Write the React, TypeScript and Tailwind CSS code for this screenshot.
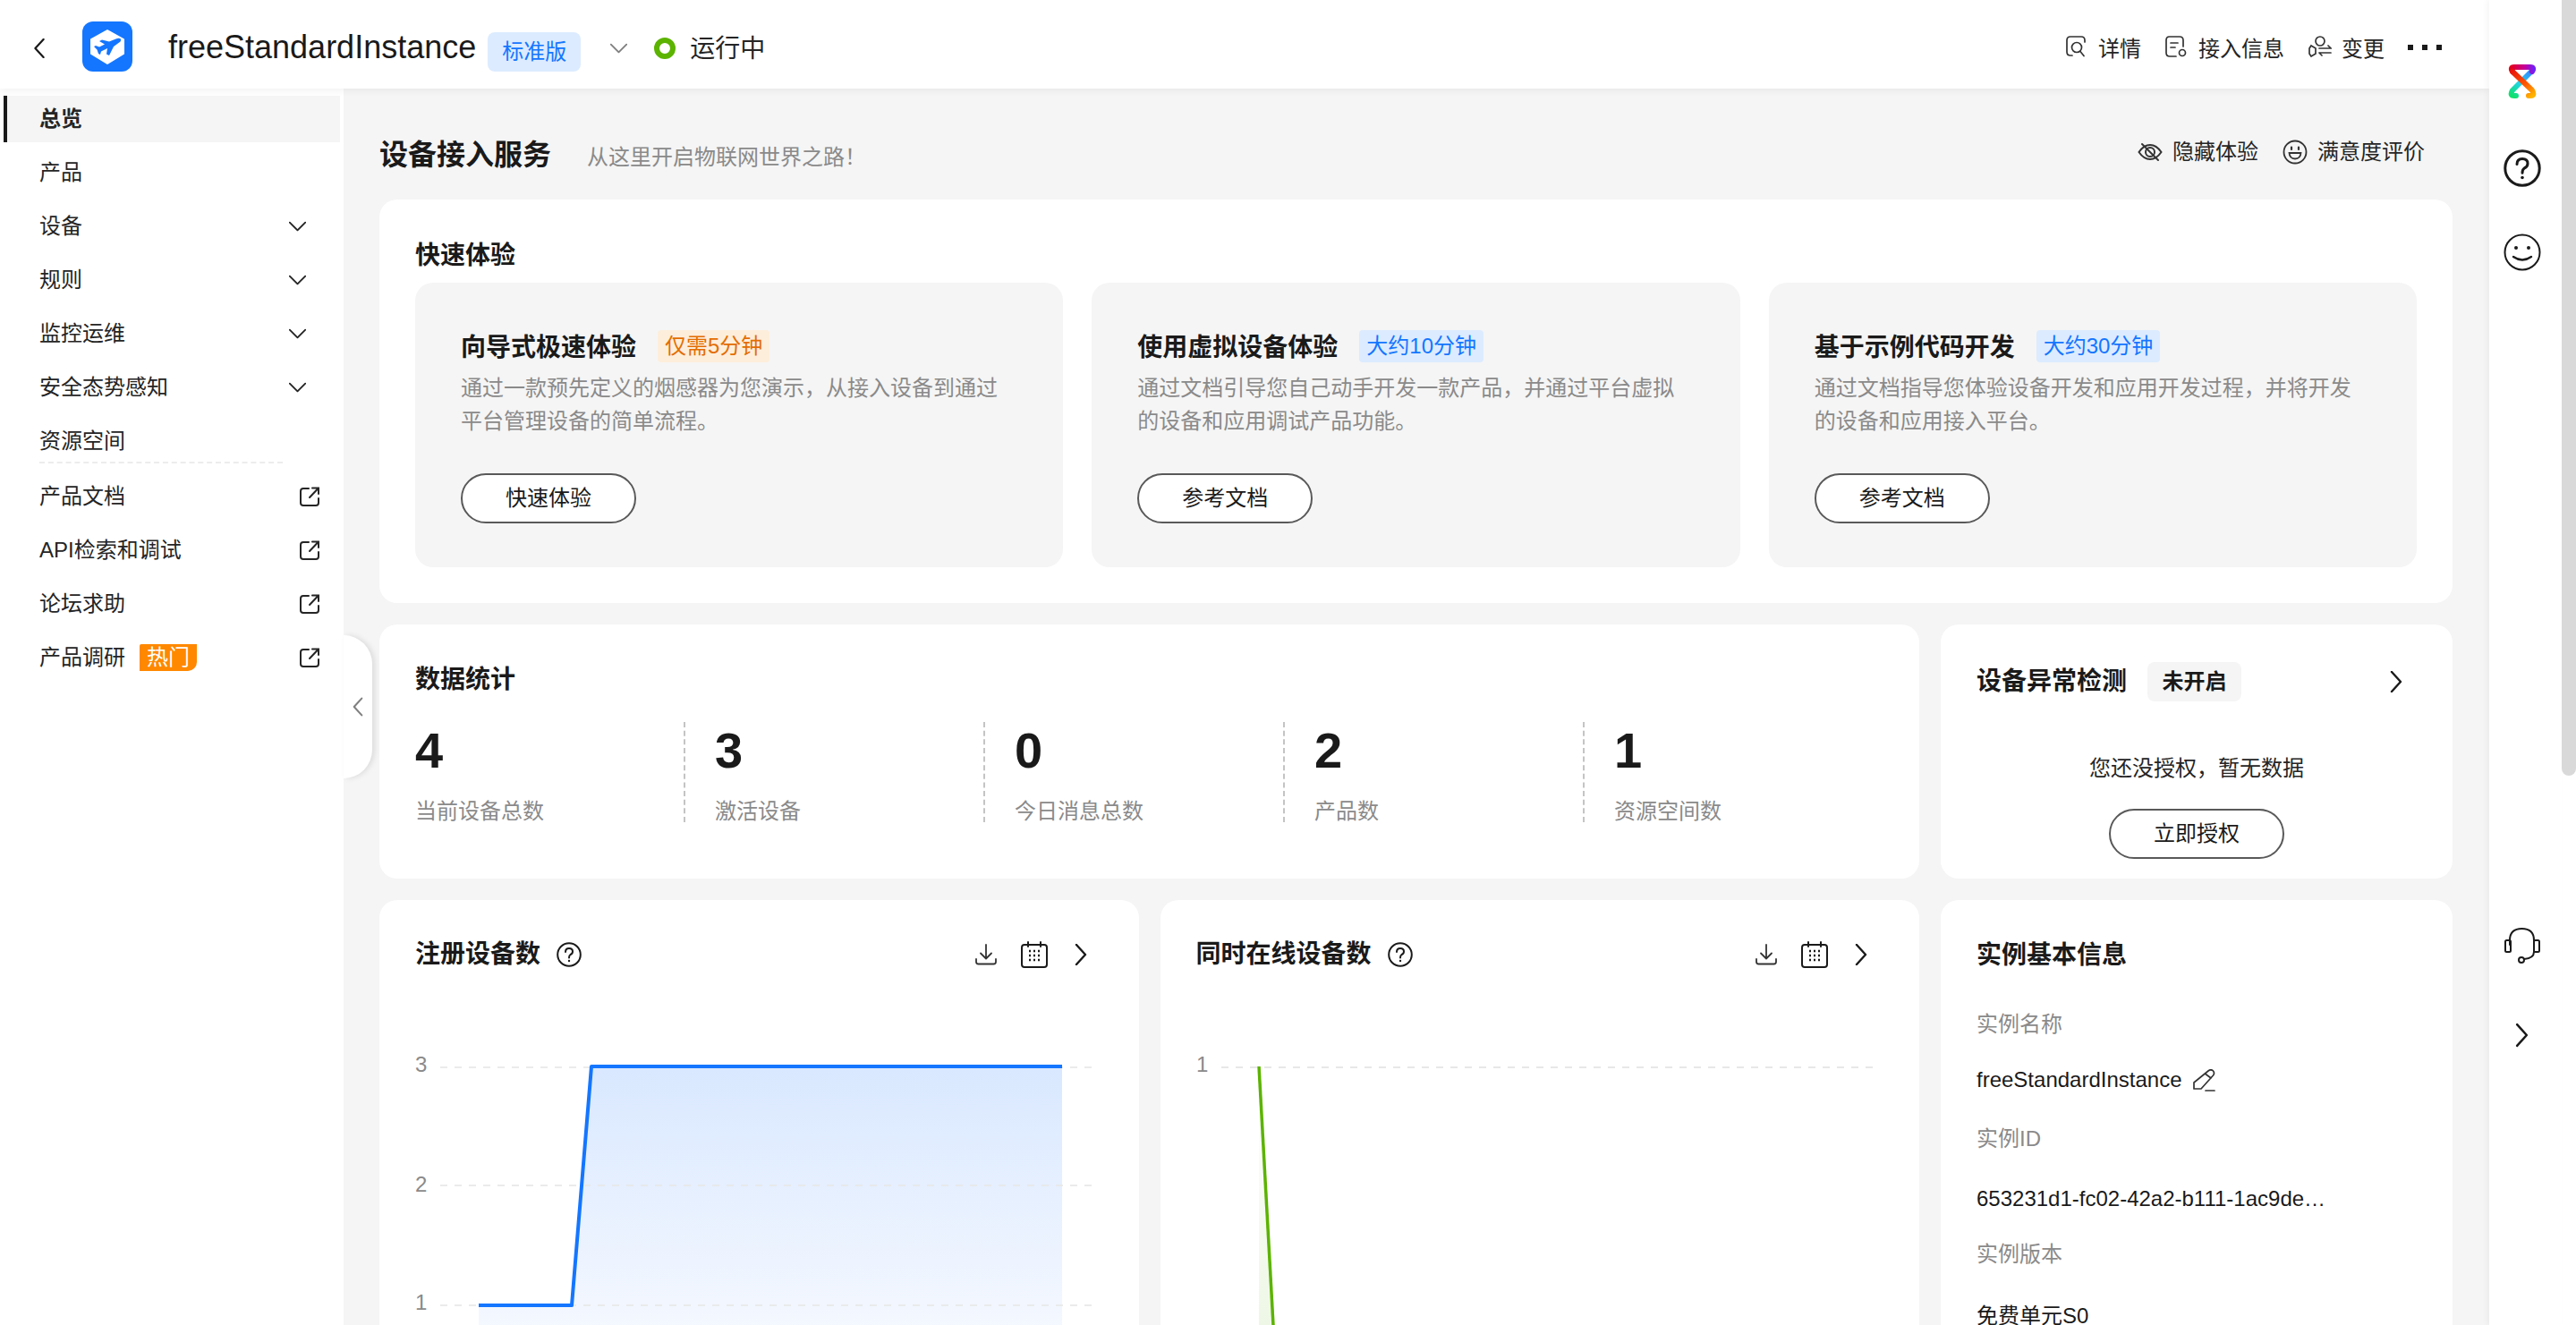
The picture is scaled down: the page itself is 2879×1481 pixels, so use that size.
import React from 'react';

const font = "font-['Liberation_Sans','Noto_Sans_CJK_SC',sans-serif]";

const Chevron = ({ dir = 'right', className = '' }: { dir?: 'right' | 'left' | 'down'; className?: string }) => {
  const d = dir === 'right' ? 'M2 1 L12 12 L2 23' : dir === 'left' ? 'M12 1 L2 12 L12 23' : 'M1 2 L12 13 L23 2';
  const box = dir === 'down' ? '0 0 24 15' : '0 0 14 24';
  return (
    <svg viewBox={box} fill="none" stroke="currentColor" strokeWidth="2.4" strokeLinecap="round" strokeLinejoin="round" className={className}>
      <path d={d} />
    </svg>
  );
};

const ExternalIcon = () => (
  <svg viewBox="0 0 22 22" fill="none" stroke="#252525" strokeWidth="2" strokeLinecap="round" className="w-[22px] h-[22px]">
    <path d="M10 2 H4 Q1 2 1 5 V18 Q1 21 4 21 H18 Q21 21 21 18 V13" />
    <path d="M11 12 L20 2.5 M14 1.5 H21 V8" />
  </svg>
);

const HelpIcon = ({ className = '' }: { className?: string }) => (
  <svg viewBox="0 0 28 28" fill="none" stroke="#1a1a1a" strokeWidth="2" strokeLinecap="round" className={className}>
    <circle cx="14" cy="14" r="12.8" />
    <path d="M10 11 Q10 7 14 7 Q18 7 18 10.5 Q18 13 15.5 14 Q14 15 14 17.5" />
    <circle cx="14" cy="21" r="1.2" fill="#1a1a1a" stroke="none" />
  </svg>
);

const DownloadIcon = () => (
  <svg viewBox="0 0 24 24" fill="none" stroke="#333" strokeWidth="1.8" strokeLinecap="round" strokeLinejoin="round" className="w-6 h-6">
    <path d="M12 1 V16 M6 10.5 L12 16.5 L18 10.5" />
    <path d="M1 17 V20 Q1 22.5 3.5 22.5 H20.5 Q23 22.5 23 20 V17" />
  </svg>
);

const CalendarIcon = () => (
  <svg viewBox="0 0 30 30" fill="none" stroke="#1a1a1a" strokeWidth="2" strokeLinecap="round" className="w-[30px] h-[30px]">
    <rect x="1" y="4" width="28" height="25" rx="3" />
    <path d="M8 1 V6 M22 1 V6" />
    <path d="M9 11 H11 M14 11 H16 M19 11 H21 M9 16 H11 M14 16 H16 M19 16 H21 M9 21 H11 M14 21 H16 M19 21 H21" strokeWidth="2.6" strokeLinecap="butt" />
  </svg>
);

const OutlineButton = ({ children }: { children: React.ReactNode }) => (
  <button className="w-[196px] h-[56px] rounded-full border-2 border-[#595959] bg-white text-[24px] text-[#1a1a1a]">{children}</button>
);

const menu = [
  { label: '总览', active: true },
  { label: '产品' },
  { label: '设备', arrow: true },
  { label: '规则', arrow: true },
  { label: '监控运维', arrow: true },
  { label: '安全态势感知', arrow: true },
  { label: '资源空间' },
];
const links = [{ label: '产品文档' }, { label: 'API检索和调试' }, { label: '论坛求助' }, { label: '产品调研', hot: true }];

const Sidebar = () => (
  <aside className="relative w-[384px] shrink-0 bg-white pt-2 pl-1">
    {menu.map((m) => (
      <div
        key={m.label}
        className={`flex items-center w-[376px] h-[52px] mb-2 text-[24px] text-[#252525] ${m.active ? 'pl-[36px] bg-[#f5f5f5] border-l-4 border-[#1a1a1a] font-bold text-[#1a1a1a]' : 'pl-[40px]'}`}
      >
        <span className="flex-1">{m.label}</span>
        {m.arrow && <Chevron dir="down" className="w-[19px] h-[12px] mr-[38px] text-[#252525]" />}
      </div>
    ))}
    <div className="ml-[40px] -mt-[11px] mb-[7px] w-[272px] border-t-2 border-dashed border-[#ececec]" />
    {links.map((l) => (
      <div key={l.label} className="flex items-center h-[60px] pl-[40px] pr-[27px] text-[24px] text-[#252525]">
        <span>{l.label}</span>
        {l.hot && (
          <span className="ml-4 w-16 h-[30px] flex items-center justify-center bg-[#ff8800] text-white rounded-tl-[2px] rounded-br-[10px]">热门</span>
        )}
        <span className="flex-1" />
        <ExternalIcon />
      </div>
    ))}
    <div className="absolute z-10 left-full top-[611px] w-8 h-[160px] flex items-center bg-white rounded-r-[32px] shadow-[3px_0_6px_rgba(0,0,0,0.1)]">
      <Chevron dir="left" className="w-[12px] h-[22px] ml-[10px] text-[#808080]" />
    </div>
  </aside>
);

const Header = () => (
  <header className="relative z-20 flex items-center h-[99px] shrink-0 bg-white pt-1 pl-[37px] pr-[53px] shadow-[0_2px_8px_rgba(0,0,0,0.06)]">
    <Chevron dir="left" className="mt-[5px] w-[14px] h-[22px] text-[#1a1a1a]" />
    <svg viewBox="0 0 56 56" className="w-14 h-14 ml-[41px]">
      <rect width="56" height="56" rx="12" fill="#1476ff" />
      <path d="M28 10 L46 20 V36 L28 47 L10 36 V20 Z" fill="#fff" stroke="#fff" strokeWidth="2" strokeLinejoin="round" />
      <path d="M42 19 Q44 20 42.5 22.5 L35 28 L30 38 L27 36.5 L28 30 L21 33.5 L20 37 L18 36 L16.5 31.5 L13 28 L15 27 L19 28.5 L25 25.5 L19 22 L22 20.5 L30 22.5 L37.5 19.5 Q40 18.5 42 19 Z" fill="#1476ff" />
    </svg>
    <span className="ml-10 mt-[2px] text-[36px] text-[#1a1a1a]">freeStandardInstance</span>
    <span className="ml-[13px] mt-[13px] w-[104px] h-11 flex items-center justify-center rounded-lg bg-[#dcebff] text-[24px] text-[#1476ff]">标准版</span>
    <Chevron dir="down" className="ml-[33px] mt-[5px] w-[19px] h-[12px] text-[#808080]" />
    <span className="ml-[30px] mt-[5px] w-6 h-6 rounded-full border-[6px] border-[#5cb300]" />
    <span className="ml-4 mt-[7px] text-[28px] text-[#252525]">运行中</span>
    <span className="flex-1" />
    <div className="flex items-center text-[24px] text-[#252525]">
      <svg viewBox="0 0 22 24" fill="none" stroke="#333" strokeWidth="1.7" strokeLinecap="round" className="w-[22px] h-6">
        <path d="M5 1 H17 Q21 1 21 5 V7 M5 1 Q1 1 1 5 V18 Q1 22 5 22 H7" />
        <circle cx="12" cy="13" r="5.5" />
        <path d="M16 17.5 L20 22.5" />
      </svg>
      <span className="ml-[14px] mt-[7px]">详情</span>
      <svg viewBox="0 0 24 24" fill="none" stroke="#333" strokeWidth="1.7" strokeLinecap="round" className="ml-[27px] w-6 h-6">
        <path d="M4.5 1 H16 Q20 1 20 5 V12 M4.5 1 Q1 1 1 5 V19 Q1 23 5 23 H12" />
        <path d="M6 8 H14 M6 13 H11" />
        <circle cx="19" cy="19" r="3.5" />
      </svg>
      <span className="ml-[13px] mt-[7px]">接入信息</span>
      <svg viewBox="0 0 26 24" fill="none" stroke="#333" strokeWidth="1.7" strokeLinecap="round" className="ml-[27px] w-[26px] h-6">
        <circle cx="13" cy="6" r="5" />
        <path d="M3 11 L8 14 V20 L3 23 L1 20 V14 Z" />
        <path d="M12 14 H25 L22 11 M12 19 H25 M12 19 L15 22" />
      </svg>
      <span className="ml-[11px] mt-[7px]">变更</span>
      <span className="ml-[26px] mt-[3px] flex gap-[10px]">
        <i className="block w-[6px] h-[6px] bg-[#1a1a1a]" />
        <i className="block w-[6px] h-[6px] bg-[#1a1a1a]" />
        <i className="block w-[6px] h-[6px] bg-[#1a1a1a]" />
      </span>
    </div>
  </header>
);

const Tag = ({ tone, children }: { tone: 'orange' | 'blue'; children: React.ReactNode }) => (
  <span className={`ml-6 h-9 px-2 flex items-center rounded-[4px] text-[24px] ${tone === 'orange' ? 'bg-[#fdeedb] text-[#e36d00]' : 'bg-[#dcebff] text-[#1476ff]'}`}>{children}</span>
);

const quick = [
  { title: '向导式极速体验', tag: '仅需5分钟', tone: 'orange' as const, desc: '通过一款预先定义的烟感器为您演示，从接入设备到通过平台管理设备的简单流程。', btn: '快速体验' },
  { title: '使用虚拟设备体验', tag: '大约10分钟', tone: 'blue' as const, desc: '通过文档引导您自己动手开发一款产品，并通过平台虚拟的设备和应用调试产品功能。', btn: '参考文档' },
  { title: '基于示例代码开发', tag: '大约30分钟', tone: 'blue' as const, desc: '通过文档指导您体验设备开发和应用开发过程，并将开发的设备和应用接入平台。', btn: '参考文档' },
];

const QuickStart = () => (
  <section className="col-span-3 rounded-[20px] bg-white px-10 pt-[43px] h-[451px]">
    <h2 className="text-[28px] leading-[40px] font-bold text-[#1a1a1a]">快速体验</h2>
    <div className="mt-[10px] grid grid-cols-3 gap-8">
      {quick.map((q) => (
        <div key={q.title} className="h-[318px] rounded-[20px] bg-[#f5f5f5] pl-[51px] pt-[53px]">
          <div className="flex items-start h-9">
            <h3 className="mt-[2px] text-[28px] leading-9 font-bold text-[#1a1a1a]">{q.title}</h3>
            <Tag tone={q.tone}>{q.tag}</Tag>
          </div>
          <p className="mt-[10px] w-[604px] text-[24px] leading-[37px] text-[#8a8a8a]">{q.desc}</p>
          <div className="mt-[40px]">
            <OutlineButton>{q.btn}</OutlineButton>
          </div>
        </div>
      ))}
    </div>
  </section>
);

const stats = [
  { value: '4', label: '当前设备总数' },
  { value: '3', label: '激活设备' },
  { value: '0', label: '今日消息总数' },
  { value: '2', label: '产品数' },
  { value: '1', label: '资源空间数' },
];

const Stats = () => (
  <section className="col-span-2 h-[284px] rounded-[20px] bg-white pl-10 pt-[42px]">
    <h2 className="text-[28px] leading-10 font-bold text-[#1a1a1a]">数据统计</h2>
    <div className="mt-[27px] flex">
      {stats.map((s, i) => (
        <div key={s.label} className={`h-[112px] ${i === 0 ? 'w-[300px]' : 'w-[335px] pl-[33px] border-l-2 border-dashed border-[#c4c4c4]'}`}>
          <div className="text-[56px] leading-[64px] font-bold text-[#1a1a1a]">{s.value}</div>
          <div className="mt-[18px] text-[24px] leading-9 text-[#8a8a8a]">{s.label}</div>
        </div>
      ))}
    </div>
  </section>
);

const Anomaly = () => (
  <section className="h-[284px] rounded-[20px] bg-white px-10 pt-[42px] flex flex-col">
    <div className="flex items-center h-11 pr-4">
      <h2 className="text-[28px] font-bold text-[#1a1a1a]">设备异常检测</h2>
      <span className="ml-[23px] w-[105px] h-11 flex items-center justify-center rounded-lg bg-[#f5f5f5] text-[24px] font-bold text-[#1a1a1a]">未开启</span>
      <span className="flex-1" />
      <Chevron dir="right" className="w-[14px] h-6 text-[#1a1a1a]" />
    </div>
    <p className="mt-[57px] text-center text-[24px] leading-9 text-[#252525]">您还没授权，暂无数据</p>
    <div className="mt-[27px] flex justify-center">
      <OutlineButton>立即授权</OutlineButton>
    </div>
  </section>
);

const ChartHeader = ({ title }: { title: string }) => (
  <div className="flex items-center h-10 pr-[58px]">
    <h2 className="text-[28px] font-bold text-[#1a1a1a]">{title}</h2>
    <HelpIcon className="ml-[18px] w-7 h-7" />
    <span className="flex-1" />
    <DownloadIcon />
    <span className="ml-[27px]"><CalendarIcon /></span>
    <Chevron dir="right" className="ml-[30px] w-[14px] h-6 text-[#1a1a1a]" />
  </div>
);

const RegisterChart = () => (
  <svg viewBox="0 0 770 340" className="mt-[78px] w-[770px] h-[340px] block overflow-visible">
    <defs>
      <linearGradient id="regFill" x1="0" y1="0" x2="0" y2="1">
        <stop offset="0" stopColor="#d9e8ff" />
        <stop offset="1" stopColor="#f6f9ff" />
      </linearGradient>
    </defs>
    <path d="M71 295 H175 L197 28 H723 V340 H71 Z" fill="url(#regFill)" />
    {[28, 160, 294].map((y) => (
      <path key={y} d={`M28 ${y} H764`} stroke="#e8e8e8" strokeOpacity="0.85" strokeWidth="2" strokeDasharray="8 8" />
    ))}
    <text x="0" y="33" fontSize="24" fill="#8a8a8a">3</text>
    <text x="0" y="167" fontSize="24" fill="#8a8a8a">2</text>
    <text x="0" y="299" fontSize="24" fill="#8a8a8a">1</text>
    <path d="M71 294 H175 L197 27 H723" fill="none" stroke="#1476ff" strokeWidth="4" strokeLinejoin="round" />
  </svg>
);

const OnlineChart = () => (
  <svg viewBox="0 0 770 340" className="mt-[78px] w-[770px] h-[340px] block overflow-visible">
    <defs>
      <linearGradient id="onlineFill" x1="0" y1="0" x2="0" y2="1">
        <stop offset="0" stopColor="#ffffff" />
        <stop offset="1" stopColor="#eef7e6" />
      </linearGradient>
    </defs>
    <path d="M70 28 L86 316 H70 Z" fill="url(#onlineFill)" />
    <path d="M28 28 H764" stroke="#e8e8e8" strokeWidth="2" strokeDasharray="8 8" />
    <text x="0" y="33" fontSize="24" fill="#8a8a8a">1</text>
    <path d="M70 27 L86 316" fill="none" stroke="#5cb300" strokeWidth="3.5" />
  </svg>
);

const InstanceField = ({ label, children, gap }: { label: string; children: React.ReactNode; gap: string }) => (
  <div>
    <div className="text-[24px] leading-9 text-[#8a8a8a]">{label}</div>
    <div className={`${gap} flex items-center text-[24px] leading-9 text-[#1a1a1a]`}>{children}</div>
  </div>
);

const InstanceInfo = () => (
  <section className="h-[600px] rounded-[20px] bg-white px-10 pt-[42px]">
    <h2 className="text-[28px] leading-10 font-bold text-[#1a1a1a]">实例基本信息</h2>
    <div className="mt-[39px]">
      <InstanceField label="实例名称" gap="mt-[26px]">
        <span>freeStandardInstance</span>
        <svg viewBox="0 0 26 25" fill="none" stroke="#333" strokeWidth="1.7" strokeLinejoin="round" strokeLinecap="round" className="ml-[11px] w-[26px] h-[25px]">
          <path d="M18 2 Q21 -0.5 23.5 2 Q25.5 4.5 23.5 7 L10 22 H2 V15 Z M15 5.5 L21 10" />
          <path d="M15 24 H25" />
        </svg>
      </InstanceField>
      <div className="mt-[30px]">
        <InstanceField label="实例ID" gap="mt-[31px]">
          <span className="block w-[392px] truncate">653231d1-fc02-42a2-b111-1ac9de9c2a0b3f1</span>
        </InstanceField>
      </div>
      <div className="mt-[26px]">
        <InstanceField label="实例版本" gap="mt-[33px]">
          <span>免费单元S0</span>
        </InstanceField>
      </div>
    </div>
  </section>
);

const Main = () => (
  <main className="flex-1 min-w-0 bg-[#f5f5f5] pl-10 pr-[41px] overflow-hidden">
    <div className="flex items-baseline h-[124px] pt-[54px]">
      <h1 className="text-[32px] leading-10 font-bold text-[#1a1a1a]">设备接入服务</h1>
      <span className="ml-10 text-[24px] text-[#8a8a8a]">从这里开启物联网世界之路！</span>
      <span className="flex-1" />
      <div className="flex items-center text-[24px] text-[#252525] -translate-y-[3px] pr-[31px]">
        <svg viewBox="0 0 28 22" fill="none" stroke="#333" strokeWidth="2" strokeLinecap="round" className="w-7 h-[22px]">
          <path d="M1.5 11 Q7 3 14 3 Q21 3 26.5 11 Q21 19 14 19 Q7 19 1.5 11 Z" />
          <circle cx="14" cy="11" r="5" />
          <path d="M5 2 L23 20" />
        </svg>
        <span className="ml-[11px]">隐藏体验</span>
        <svg viewBox="0 0 28 28" fill="none" stroke="#333" strokeWidth="1.8" strokeLinecap="round" className="ml-[27px] w-7 h-7">
          <circle cx="14" cy="14" r="12.5" />
          <path d="M10 8.5 V11 M18 8.5 V11" strokeWidth="2.2" />
          <path d="M7.5 15 H20.5 Q20 21.5 14 21.5 Q8 21.5 7.5 15 Z" />
        </svg>
        <span className="ml-[11px]">满意度评价</span>
      </div>
    </div>
    <div className="grid grid-cols-[1fr_1fr_572px] gap-6">
      <QuickStart />
      <Stats />
      <Anomaly />
      <section className="h-[600px] rounded-[20px] bg-white pl-10 pt-[41px]">
        <ChartHeader title="注册设备数" />
        <RegisterChart />
      </section>
      <section className="h-[600px] rounded-[20px] bg-white pl-10 pt-[41px]">
        <ChartHeader title="同时在线设备数" />
        <OnlineChart />
      </section>
      <InstanceInfo />
    </div>
  </main>
);

const Rail = () => (
  <div className="relative z-30 w-[81px] shrink-0 bg-white shadow-[-3px_0_6px_rgba(0,0,0,0.04)] flex flex-col items-center pt-[72px] pr-2">
    <svg viewBox="0 0 32 38" fill="none" strokeWidth="6" strokeLinecap="round" className="w-8 h-[38px]">
      <defs>
        <linearGradient id="rTop" gradientUnits="userSpaceOnUse" x1="2" y1="0" x2="30" y2="0">
          <stop offset="0" stopColor="#e60012" />
          <stop offset="0.6" stopColor="#c4009a" />
          <stop offset="1" stopColor="#6a22ff" />
        </linearGradient>
        <linearGradient id="rDown" gradientUnits="userSpaceOnUse" x1="5" y1="6" x2="27" y2="35">
          <stop offset="0" stopColor="#e8130a" />
          <stop offset="0.6" stopColor="#ff5a00" />
          <stop offset="1" stopColor="#ffb300" />
        </linearGradient>
        <linearGradient id="rUp" gradientUnits="userSpaceOnUse" x1="27" y1="6" x2="5" y2="35">
          <stop offset="0" stopColor="#3a7bff" />
          <stop offset="0.55" stopColor="#22d3ee" />
          <stop offset="1" stopColor="#10e070" />
        </linearGradient>
      </defs>
      <path d="M27 7 L5 29 Q1.5 35 7 35 H9" stroke="url(#rUp)" />
      <path d="M5 8 Q2 3 7 3 H25 Q30 3 27 8" stroke="url(#rTop)" />
      <path d="M5 8 L27 29 Q30.5 35 25 35 H23" stroke="url(#rDown)" />
    </svg>
    <HelpIcon className="mt-[57px] w-[42px] h-[42px]" />
    <svg viewBox="0 0 42 42" fill="none" stroke="#1a1a1a" strokeWidth="2" strokeLinecap="round" className="mt-[52px] w-[42px] h-[42px]">
      <circle cx="21" cy="21" r="19.5" />
      <circle cx="14" cy="16" r="2" fill="#1a1a1a" stroke="none" />
      <circle cx="28" cy="16" r="2" fill="#1a1a1a" stroke="none" />
      <path d="M11 26 Q21 33 31 26" strokeWidth="2.4" />
    </svg>
    <svg viewBox="0 0 40 40" fill="none" stroke="#1a1a1a" strokeWidth="2" strokeLinecap="round" className="mt-[734px] w-10 h-10">
      <path d="M6 19 V14 Q6 1 19.5 1 Q33 1 33 14 V27 Q33 34 22 35" />
      <rect x="1" y="14" width="6" height="13" rx="1.5" />
      <rect x="33" y="14" width="6" height="13" rx="1.5" />
      <circle cx="19" cy="36" r="3" />
    </svg>
    <Chevron dir="right" className="mt-[66px] w-[15px] h-7 text-[#1a1a1a]" />
  </div>
);

export default function App() {
  return (
    <div className={`flex w-full h-screen overflow-hidden bg-white ${font}`}>
      <div className="flex-1 min-w-0 flex flex-col">
        <Header />
        <div className="flex flex-1 min-h-0">
          <Sidebar />
          <Main />
        </div>
      </div>
      <Rail />
      {/* page scrollbar */}
      <div className="w-4 shrink-0 bg-white">
        <div className="h-[867px] rounded-b-lg bg-[#d9d9d9]" />
      </div>
    </div>
  );
}
